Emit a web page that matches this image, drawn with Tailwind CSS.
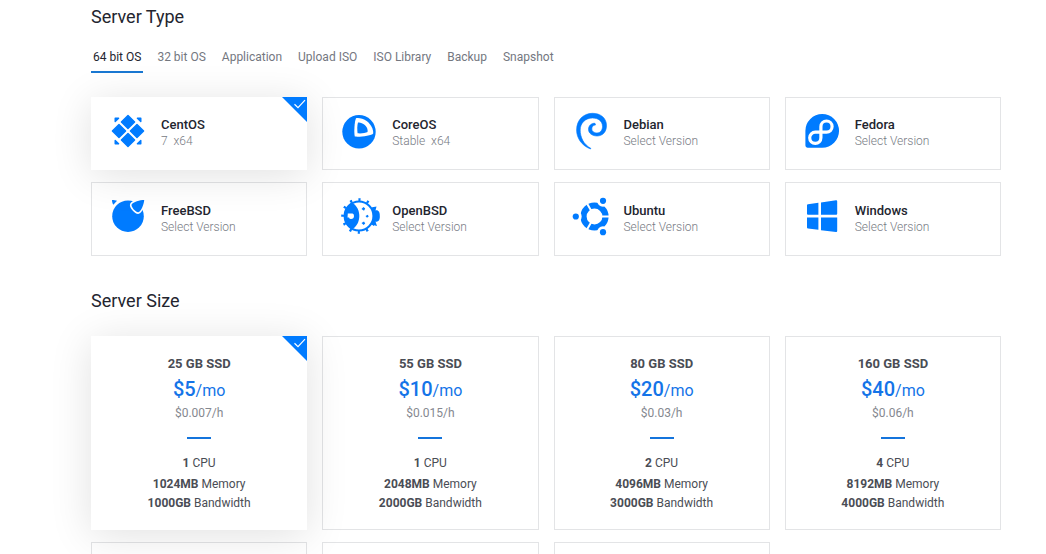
<!DOCTYPE html>
<html lang="en">
<head>
<meta charset="utf-8">
<title>Deploy server</title>
<script src="https://cdn.jsdelivr.net/npm/@tailwindcss/browser@4"></script>
</head>
<body class="bg-white font-['Roboto',sans-serif] text-[#23252f] text-xs">
<main class="pl-[91px] pr-[45px] pt-[5px] pb-8">
  <section>
    <h2 class="text-lg leading-6">Server Type</h2>
    <div role="tablist" class="mt-[19px] flex gap-3 text-[#74777f] leading-[18px]">
      <button role="tab" aria-selected="true" class="border-b-2 border-[#1a78d2] px-0.5 pb-[5px] text-[#23252f]">64 bit OS</button>
      <button role="tab" class="px-0.5 pb-[7px]">32 bit OS</button>
      <button role="tab" class="px-0.5 pb-[7px]">Application</button>
      <button role="tab" class="px-0.5 pb-[7px]">Upload ISO</button>
      <button role="tab" class="px-0.5 pb-[7px]">ISO Library</button>
      <button role="tab" class="px-0.5 pb-[7px]">Backup</button>
      <button role="tab" class="px-0.5 pb-[7px]">Snapshot</button>
    </div>
    <div class="mt-6 grid grid-cols-4 grid-rows-[73px_74px] gap-x-[15px] gap-y-3">
      <button aria-pressed="true" class="relative flex items-start border border-white bg-white px-4 pt-[13px] text-left shadow-[0_5px_40px_rgba(0,0,0,0.12)]">
        <svg class="size-10 shrink-0 text-[#007bff]" viewBox="0 0 40 40" fill="currentColor" stroke="currentColor" stroke-width="1.4" stroke-linejoin="round"><path d="M20 4.4 26.6 11 20 17.6 13.4 11ZM20 22.4 26.6 29 20 35.600 13.4 29ZM11 13.4 17.6 20 11 26.6 4.4 20ZM29 13.4 35.600 20 29 26.6 22.4 20Z"/><path d="M7.200 7.200H10.600L7.200 10.600ZM32.800 7.200V10.600L29.400 7.200ZM7.200 32.800V29.400L10.600 32.800ZM32.800 32.800H29.400L32.800 29.400Z"/></svg>
        <span class="ml-[13px] mt-1.5 leading-4"><span class="block text-[13px] font-medium">CentOS</span><span class="block font-light text-[#777b84] whitespace-pre">7  x64</span></span>
        <svg class="absolute -right-px -top-px size-[25px]" viewBox="0 0 25 25"><path fill="#007bff" d="M0 0H25V25Z"/><path fill="none" stroke="#fff" stroke-width="1.2" d="M12.500 7.3 16 10.7 23 3.200"/></svg>
      </button>
      <button class="flex items-start border border-[#e3e4e6] px-4 pt-[13px] text-left">
        <svg class="size-10 shrink-0 text-[#007bff]" viewBox="0 0 40 40" fill="currentColor"><circle cx="20" cy="20.8" r="16.7"/><path fill="#fff" d="M17 7.2C18.5 6.5 24 7 28 10.2C32 13.5 34.5 18 34.2 22.5C33 24.5 21 26.2 15.8 25.6C14.8 21 15.5 10.5 17 7.2Z"/><path d="M19 11.6C22 10.8 29.5 14.5 28.6 21C26.5 22.2 22 22.6 18.6 22.3C18 19 18.2 14 19 11.6Z"/></svg>
        <span class="ml-[13px] mt-1.5 leading-4"><span class="block text-[13px] font-medium">CoreOS</span><span class="block font-light text-[#777b84] whitespace-pre">Stable  x64</span></span>
      </button>
      <button class="flex items-start border border-[#e3e4e6] px-4 pt-[13px] text-left">
        <svg class="size-10 shrink-0 text-[#007bff]" viewBox="0 0 40 40" fill="currentColor" stroke="currentColor" stroke-width="0.600"><path d="M19.500 38C10.500 34.500 5.600 27 5.600 19C5.600 9 12.500 2.300 21.500 2.300C29.500 2.300 35.500 7 35.500 14.500C35.500 21 31.500 25 26 25C21 25 17.500 22 17.500 18.500C17.500 14.500 20.500 12 24 12.300L24.500 14C22 14 20.800 16 20.800 18C20.800 20.500 23.500 22 26 22C29.500 22 31.500 19 31.500 15.500C31.500 10 27 7 21.500 7C14.500 7 9.200 12 9.200 19C9.200 26 12.500 33.500 19.800 37.300Z"/></svg>
        <span class="ml-[13px] mt-1.5 leading-4"><span class="block text-[13px] font-medium">Debian</span><span class="block font-light text-[#777b84]">Select Version</span></span>
      </button>
      <button class="flex items-start border border-[#e3e4e6] px-4 pt-[13px] text-left">
        <svg class="size-10 shrink-0 text-[#007bff]" viewBox="0 0 40 40" fill="currentColor"><path d="M20.200 3A16.800 16.800 0 0 1 20.200 36.700H5.500A2.200 2.200 0 0 1 3.400 34.500V19.800A16.800 16.800 0 0 1 20.200 3Z"/><path fill="none" stroke="#fff" stroke-width="3.200" d="M18.900 21.200H24.500A5.600 5.600 0 1 0 18.900 15.600V26.800A5.600 5.600 0 1 1 13.300 21.200H18.900"/></svg>
        <span class="ml-[13px] mt-1.5 leading-4"><span class="block text-[13px] font-medium">Fedora</span><span class="block font-light text-[#777b84]">Select Version</span></span>
      </button>
      <button class="flex items-start border border-[#e3e4e6] px-4 pt-[13px] text-left">
        <svg class="size-10 shrink-0 text-[#007bff]" viewBox="0 0 40 40" fill="currentColor"><circle cx="20" cy="20.200" r="15.800"/><path d="M4 4C5.500 4 8 4.300 9 4.800L5.300 8.800C4.500 7.500 4 5.500 4 4Z"/><path stroke="#fff" stroke-width="3.200" paint-order="stroke" d="M36.200 4C32 4 25 5.800 23.600 8.500C22.800 10.500 27.500 16.500 30.300 16.300C33 15.800 36 8 36.200 4Z"/></svg>
        <span class="ml-[13px] mt-[7px] leading-4"><span class="block text-[13px] font-medium">FreeBSD</span><span class="block font-light text-[#777b84]">Select Version</span></span>
      </button>
      <button class="flex items-start border border-[#e3e4e6] px-4 pt-[13px] text-left">
        <svg class="size-10 shrink-0 overflow-visible text-[#007bff]" viewBox="0 0 40 40" fill="currentColor"><circle cx="20" cy="20" r="16.400" fill="none" stroke="currentColor" stroke-width="2.800" stroke-dasharray="2.200 6.387" stroke-dashoffset="1.100"/><circle cx="20" cy="20" r="14.400" fill="none" stroke="currentColor" stroke-width="2"/><path d="M13.500 7C18 9.500 20.300 15 20.300 20C20.300 25 18 30.500 13.500 33C8 30.500 5 26 5 20C5 14 8 9.500 13.500 7Z"/><path fill="#fff" d="M8.800 17.500H13.500Q15 17.500 15 20Q15 23 12 23Q10.400 23 10 21.500H8.500Z"/><path d="M22.500 13 24.500 11 26.200 12.500 25 14.700ZM26.500 20 28.800 18.800 29.700 20.500 28 21.700ZM22.500 27 25 25.500 26.200 27.600 24.600 29Z"/><path d="M32.500 11.500 37.500 10.500 36.500 14.500C39 13.500 41.200 16 40.800 20C41.200 24 39 26.500 36.500 25.500L38 30 32.500 28.500 34 23.500V16.500Z"/></svg>
        <span class="ml-[13px] mt-[7px] leading-4"><span class="block text-[13px] font-medium">OpenBSD</span><span class="block font-light text-[#777b84]">Select Version</span></span>
      </button>
      <button class="flex items-start border border-[#e3e4e6] px-4 pt-[13px] text-left">
        <svg class="size-10 shrink-0 text-[#007bff]" viewBox="0 0 40 40" fill="currentColor"><circle cx="23.500" cy="20.500" r="11" fill="none" stroke="currentColor" stroke-width="6.200"/><path fill="none" stroke="#fff" stroke-width="2" d="M23.500 20.500H40M23.500 20.500 15 5.800M23.500 20.500 15 35.200"/><g stroke="#fff" stroke-width="5.600" paint-order="stroke"><circle cx="4.800" cy="20.500" r="3.100"/><circle cx="32" cy="4.800" r="3.100"/><circle cx="32" cy="36.200" r="3.100"/></g></svg>
        <span class="ml-[13px] mt-[7px] leading-4"><span class="block text-[13px] font-medium">Ubuntu</span><span class="block font-light text-[#777b84]">Select Version</span></span>
      </button>
      <button class="flex items-start border border-[#e3e4e6] px-4 pt-[13px] text-left">
        <svg class="size-10 shrink-0 text-[#007bff]" viewBox="0 0 40 40" fill="currentColor"><path d="M6 8.200 16.400 6.800V18.700H6Q5 18.700 5 17.700V9.200Q5 8.400 6 8.200ZM19 6.400 34 4.200Q35.200 4.100 35.200 5.200V17.700Q35.200 18.700 34.200 18.700H19ZM5 21.600H16.400V33.800L6 32.500Q5 32.300 5 31.400ZM19 21.600H35.200V35Q35.200 36.200 34 36L19 34.200Z"/></svg>
        <span class="ml-[13px] mt-[7px] leading-4"><span class="block text-[13px] font-medium">Windows</span><span class="block font-light text-[#777b84]">Select Version</span></span>
      </button>
    </div>
  </section>

  <section class="mt-[33px]">
    <h2 class="text-lg leading-6">Server Size</h2>
    <div class="mt-[23px] grid grid-cols-4 gap-x-[15px] gap-y-3 text-[#4a4d55]">
      <button aria-pressed="true" class="relative flex min-h-[194px] flex-col items-center border border-white bg-white pt-[19px] leading-4 shadow-[0_5px_40px_rgba(0,0,0,0.12)]">
        <span class="text-[13px] font-bold">25 GB SSD</span>
        <span class="mt-[3px] text-base leading-[26px] text-[#1474e8]"><span class="text-xl font-medium">$5</span>/mo</span>
        <span class="mt-px text-[#85888f]">$0.007/h</span>
        <span class="mt-4 h-0.5 w-6 bg-[#1474dc]"></span>
        <span class="mt-4"><b class="font-bold">1</b> CPU</span>
        <span class="mt-[5px]"><b class="font-bold">1024MB</b> Memory</span>
        <span class="mt-[3px]"><b class="font-bold">1000GB</b> Bandwidth</span>
        <svg class="absolute -right-px -top-px size-[25px]" viewBox="0 0 25 25"><path fill="#007bff" d="M0 0H25V25Z"/><path fill="none" stroke="#fff" stroke-width="1.2" d="M12.500 7.3 16 10.7 23 3.200"/></svg>
      </button>
      <button class="flex min-h-[194px] flex-col items-center border border-[#e3e4e6] pt-[19px] leading-4">
        <span class="text-[13px] font-bold">55 GB SSD</span>
        <span class="mt-[3px] text-base leading-[26px] text-[#1474e8]"><span class="text-xl font-medium">$10</span>/mo</span>
        <span class="mt-px text-[#85888f]">$0.015/h</span>
        <span class="mt-4 h-0.5 w-6 bg-[#1474dc]"></span>
        <span class="mt-4"><b class="font-bold">1</b> CPU</span>
        <span class="mt-[5px]"><b class="font-bold">2048MB</b> Memory</span>
        <span class="mt-[3px]"><b class="font-bold">2000GB</b> Bandwidth</span>
      </button>
      <button class="flex min-h-[194px] flex-col items-center border border-[#e3e4e6] pt-[19px] leading-4">
        <span class="text-[13px] font-bold">80 GB SSD</span>
        <span class="mt-[3px] text-base leading-[26px] text-[#1474e8]"><span class="text-xl font-medium">$20</span>/mo</span>
        <span class="mt-px text-[#85888f]">$0.03/h</span>
        <span class="mt-4 h-0.5 w-6 bg-[#1474dc]"></span>
        <span class="mt-4"><b class="font-bold">2</b> CPU</span>
        <span class="mt-[5px]"><b class="font-bold">4096MB</b> Memory</span>
        <span class="mt-[3px]"><b class="font-bold">3000GB</b> Bandwidth</span>
      </button>
      <button class="flex min-h-[194px] flex-col items-center border border-[#e3e4e6] pt-[19px] leading-4">
        <span class="text-[13px] font-bold">160 GB SSD</span>
        <span class="mt-[3px] text-base leading-[26px] text-[#1474e8]"><span class="text-xl font-medium">$40</span>/mo</span>
        <span class="mt-px text-[#85888f]">$0.06/h</span>
        <span class="mt-4 h-0.5 w-6 bg-[#1474dc]"></span>
        <span class="mt-4"><b class="font-bold">4</b> CPU</span>
        <span class="mt-[5px]"><b class="font-bold">8192MB</b> Memory</span>
        <span class="mt-[3px]"><b class="font-bold">4000GB</b> Bandwidth</span>
      </button>
      <button class="min-h-[194px] border border-[#e3e4e6]"></button>
      <button class="min-h-[194px] border border-[#e3e4e6]"></button>
      <button class="min-h-[194px] border border-[#e3e4e6]"></button>
    </div>
  </section>
</main>
</body>
</html>
